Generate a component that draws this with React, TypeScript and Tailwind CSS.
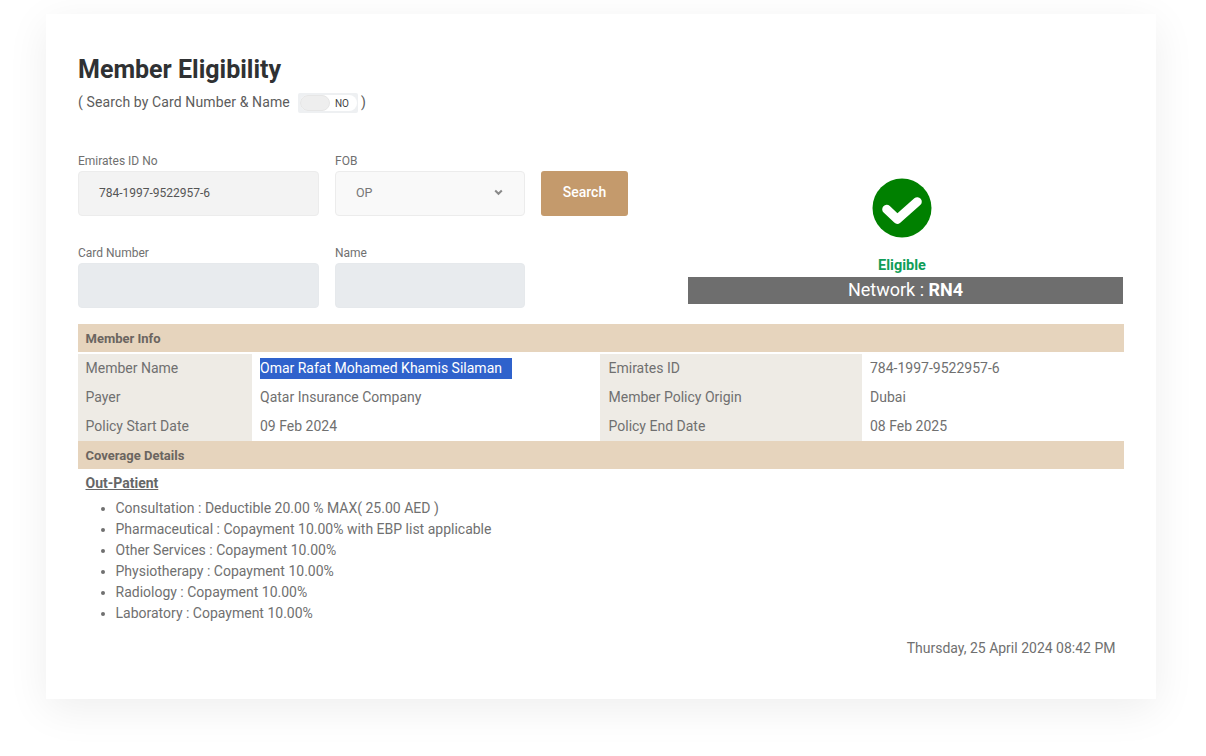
export default function App() {
  const rows = [
    ["Member Name", "Omar Rafat Mohamed Khamis Silaman", "Emirates ID", "784-1997-9522957-6"],
    ["Payer", "Qatar Insurance Company", "Member Policy Origin", "Dubai"],
    ["Policy Start Date", "09 Feb 2024", "Policy End Date", "08 Feb 2025"],
  ];
  const items = [
    "Consultation : Deductible 20.00 % MAX( 25.00 AED )",
    "Pharmaceutical : Copayment 10.00% with EBP list applicable",
    "Other Services : Copayment 10.00%",
    "Physiotherapy : Copayment 10.00%",
    "Radiology : Copayment 10.00%",
    "Laboratory : Copayment 10.00%",
  ];
  return (
    <div className="w-[1206px] h-[756px] overflow-hidden bg-white pt-[14px] pl-[46px] font-['Roboto',sans-serif] text-[#707070]">
      <div className="w-[1110px] h-[685px] bg-white pt-[41px] pl-[32px] pr-[32px] shadow-[0_10px_40px_rgba(0,0,0,0.07)]">
        <h1 className="h-[30px] text-[25px] leading-[30px] font-bold text-[#2f3133]">Member Eligibility</h1>
        <div className="mt-[3px] h-[28px] flex items-center text-[14px] tracking-[0.12px] text-[#5c5c5c]">
          <span>( Search by Card Number &amp; Name</span>
          <span className="ml-[8px] mt-[2px] w-[60px] h-[20px] flex items-center bg-[#eef0f2] rounded-[2px] p-[2px] pr-[1px]">
            <span className="flex-1 h-[16px] flex items-center bg-white rounded-full">
              <span className="w-[30px] h-[16px] bg-[#eeeeee] rounded-full border border-[#e6e6e6]"></span>
              <span className="ml-[5px] text-[10px] tracking-normal text-[#444]">NO</span>
            </span>
          </span>
          <span className="ml-[3px]">)</span>
        </div>
        <div className="mt-[36px] flex">
          <div className="w-[610px] shrink-0">
            <div className="flex gap-[16px]">
              <div className="w-[241px]">
                <div className="h-[18px] text-[12px] leading-[18px] text-[#707070]">Emirates ID No</div>
                <div className="mt-[1px] h-[45px] flex items-center pl-[20px] pb-[2px] rounded-[4px] bg-[#f3f3f3] border border-[#ececec] text-[12px] text-[#555]">784-1997-9522957-6</div>
              </div>
              <div className="w-[190px]">
                <div className="h-[18px] text-[12px] leading-[18px] text-[#707070]">FOB</div>
                <div className="mt-[1px] h-[45px] flex items-center justify-between pl-[20px] pr-[21px] rounded-[4px] bg-[#f9f9f9] border border-[#ececec] text-[12.5px] text-[#777]">
                  <span>OP</span>
                  <svg width="9" height="7" viewBox="0 0 9 7" className="mb-[3px]"><path d="M1.2 1.5 L4.5 4.8 L7.8 1.5" fill="none" stroke="#8a8a8a" strokeWidth="2" /></svg>
                </div>
              </div>
              <div className="pt-[19px]">
                <div className="w-[87px] h-[45px] flex items-center justify-center pb-[2px] rounded-[3px] bg-[#c49a6c] text-[14px] font-medium text-white">Search</div>
              </div>
            </div>
            <div className="mt-[28px] flex gap-[16px]">
              <div className="w-[241px]">
                <div className="h-[18px] text-[12px] leading-[18px] text-[#707070]">Card Number</div>
                <div className="mt-[1px] h-[45px] rounded-[4px] bg-[#e8ebee] border border-[#e6e9ec]"></div>
              </div>
              <div className="w-[190px]">
                <div className="h-[18px] text-[12px] leading-[18px] text-[#707070]">Name</div>
                <div className="mt-[1px] h-[45px] rounded-[4px] bg-[#e8ebee] border border-[#e6e9ec]"></div>
              </div>
            </div>
          </div>
          <div className="w-[435px] shrink-0 pt-[26px] flex flex-col items-center">
            <div className="mr-[7px] flex flex-col items-center">
              <svg width="60" height="60" viewBox="0 0 60 60">
                <circle cx="30" cy="30" r="29.5" fill="#008000" />
                <path d="M14.7 31.3 L25.3 41.3 L45.3 23.7" fill="none" stroke="#fff" strokeWidth="9" strokeLinecap="round" strokeLinejoin="round" />
              </svg>
              <div className="mt-[18px] h-[20px] text-[14.5px] leading-[20px] font-bold text-[#0f9d58]">Eligible</div>
            </div>
            <div className="mt-[1px] w-full h-[27px] flex items-center justify-center pb-[2px] bg-[#6e6e6e] text-[18px] text-white">
              Network :&nbsp;<b>RN4</b>
            </div>
          </div>
        </div>
        <div className="mt-[16px] w-[1046px]">
          <div className="h-[28px] flex items-center pl-[7.5px] pt-[1px] bg-[#e6d4bd] text-[13px] font-bold text-[#6b6560]">Member Info</div>
          <div className="pt-[2px] text-[14px]">
            {rows.map((r, i) => (
              <div key={i} className="h-[29px] flex leading-[29px]">
                <div className="w-[174px] pl-[7.5px] bg-[#eeebe5]">{r[0]}</div>
                <div className="w-[348px] pl-[8px]">
                  {i === 0 ? (
                    <span className="inline-block w-[252px] h-[21px] leading-[21px] bg-[#2f62cc] text-white">{r[1]}</span>
                  ) : r[1]}
                </div>
                <div className="w-[262px] pl-[8.5px] bg-[#eeebe5]">{r[2]}</div>
                <div className="w-[262px] pl-[8px]">{r[3]}</div>
              </div>
            ))}
          </div>
          <div className="h-[28px] flex items-center pl-[7.5px] pt-[1px] bg-[#e6d4bd] text-[13px] font-bold text-[#6b6560]">Coverage Details</div>
          <div className="mt-[4px] pl-[7.5px] h-[20px] text-[14px] leading-[20px] font-bold underline text-[#666]">Out-Patient</div>
          <ul className="mt-[5px] pl-[37.5px] list-disc text-[14px] leading-[21px]">
            {items.map((t) => <li key={t}>{t}</li>)}
          </ul>
          <div className="mt-[14px] pr-[8.5px] text-right text-[14px] leading-[21px]">Thursday, 25 April 2024 08:42 PM</div>
        </div>
      </div>
    </div>
  );
}
